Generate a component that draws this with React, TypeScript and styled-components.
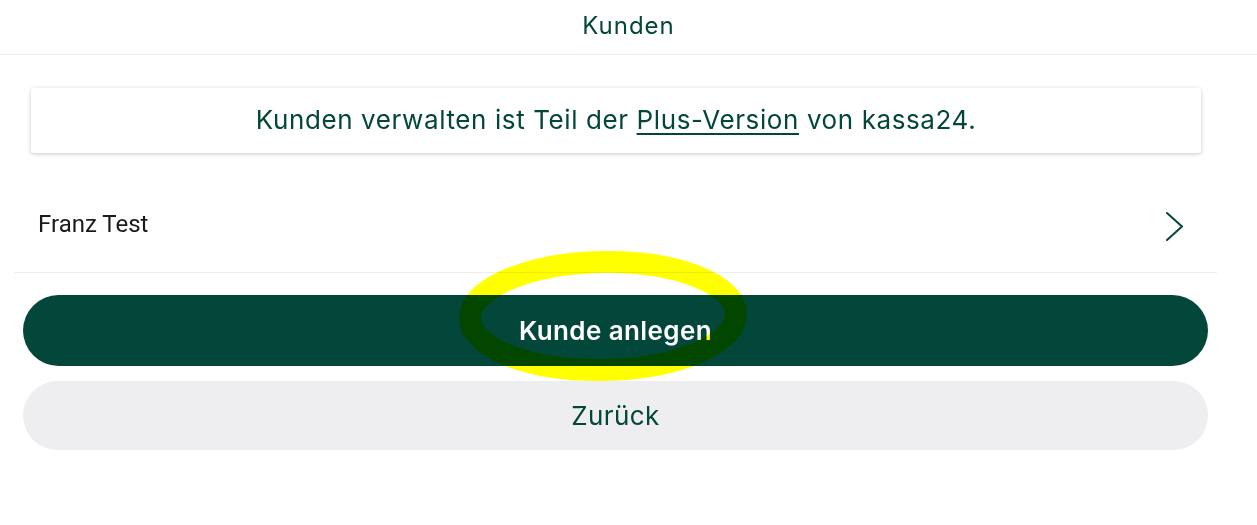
import React from 'react'
import styled, {createGlobalStyle} from 'styled-components'

const GREEN = '#03463a'

const GlobalStyle = createGlobalStyle`
  html, body {
    margin: 0;
    padding: 0;
    background: #ffffff;
  }
  body {
    font-family: Inter, "Noto Sans", sans-serif;
  }
`

export default function App() {
  return (
    <Page>
      <GlobalStyle />
      <Header>
        <Title>Kunden</Title>
      </Header>
      <Content>
        <Banner>
          <BannerText>
            Kunden verwalten ist Teil der <PlusLink href="#">Plus-Version</PlusLink> von
            kassa24.
          </BannerText>
        </Banner>
        <CustomerRow>
          <CustomerName>Franz Test</CustomerName>
          <Chevron />
        </CustomerRow>
        <Actions>
          <PillButton variant="primary">Kunde anlegen</PillButton>
          <PillButton variant="secondary">Zurück</PillButton>
        </Actions>
      </Content>
      <Highlight />
    </Page>
  )
}

function Chevron() {
  return (
    <ChevronIcon width="20" height="30" viewBox="0 0 20 30">
      <path
        d="M2 2 L17 15.5 L2 29"
        fill="none"
        stroke={GREEN}
        strokeWidth="2"
        strokeLinecap="round"
        strokeLinejoin="round"
      />
    </ChevronIcon>
  )
}

// hand-drawn marker ring laid over the primary button
function Highlight() {
  return (
    <HighlightSvg width="1257" height="525" viewBox="0 0 1257 525">
      <ellipse
        cx="603"
        cy="316"
        rx="133"
        ry="54"
        transform="rotate(-1 603 316)"
        fill="none"
        stroke="#ffff00"
        strokeWidth="22"
      />
    </HighlightSvg>
  )
}

const Page = styled.div`
  position: relative;
  width: 1257px;
  height: 525px;
  overflow: hidden;
  background: #ffffff;
`

const Header = styled.header`
  height: 54px;
  display: flex;
  align-items: center;
  justify-content: center;
  border-bottom: 1px solid #ececec;
`

const Title = styled.h1`
  margin: -4px 0 0;
  font-size: 24px;
  font-weight: 400;
  color: ${GREEN};
  letter-spacing: 1px;
`

const Content = styled.main`
  width: 1232px;
  display: flex;
  flex-direction: column;
`

const Banner = styled.div`
  margin: 33px 31px 0;
  height: 65px;
  display: flex;
  align-items: center;
  justify-content: center;
  background: #ffffff;
  border-radius: 3px;
  box-shadow: 0 1px 4px rgba(0, 0, 0, 0.22);
`

const BannerText = styled.p`
  margin: -2px 0 0;
  font-size: 26px;
  letter-spacing: 0.6px;
  color: ${GREEN};
`

const PlusLink = styled.a`
  color: ${GREEN};
  text-decoration: underline;
  text-underline-offset: 4px;
  text-decoration-thickness: 2px;
`

const CustomerRow = styled.div`
  margin: 27px 15px 0 14px;
  height: 93px;
  display: flex;
  align-items: center;
  justify-content: space-between;
  padding: 0 32px 0 24px;
  border-bottom: 1px solid #ededed;
  box-sizing: border-box;
`

const CustomerName = styled.span`
  font-family: Roboto, "Liberation Sans", sans-serif;
  font-size: 24px;
  color: #1a1a1a;
  margin-top: -4px;
`

const ChevronIcon = styled.svg`
  display: block;
`

const Actions = styled.div`
  margin: 22px 24px 0 23px;
  display: flex;
  flex-direction: column;
  gap: 15px;
`

const PillButton = styled.button<{variant: 'primary' | 'secondary'}>`
  height: ${(p) => (p.variant === 'primary' ? '71px' : '69px')};
  border: none;
  border-radius: 36px;
  font-family: Inter, "Noto Sans", sans-serif;
  font-size: 26px;
  letter-spacing: 0.4px;
  font-weight: ${(p) => (p.variant === 'primary' ? 600 : 400)};
  background: ${(p) => (p.variant === 'primary' ? GREEN : '#eeeef0')};
  color: ${(p) => (p.variant === 'primary' ? '#ffffff' : GREEN)};
  cursor: pointer;
`

const HighlightSvg = styled.svg`
  position: absolute;
  left: 0;
  top: 0;
  pointer-events: none;
  mix-blend-mode: multiply;
`
